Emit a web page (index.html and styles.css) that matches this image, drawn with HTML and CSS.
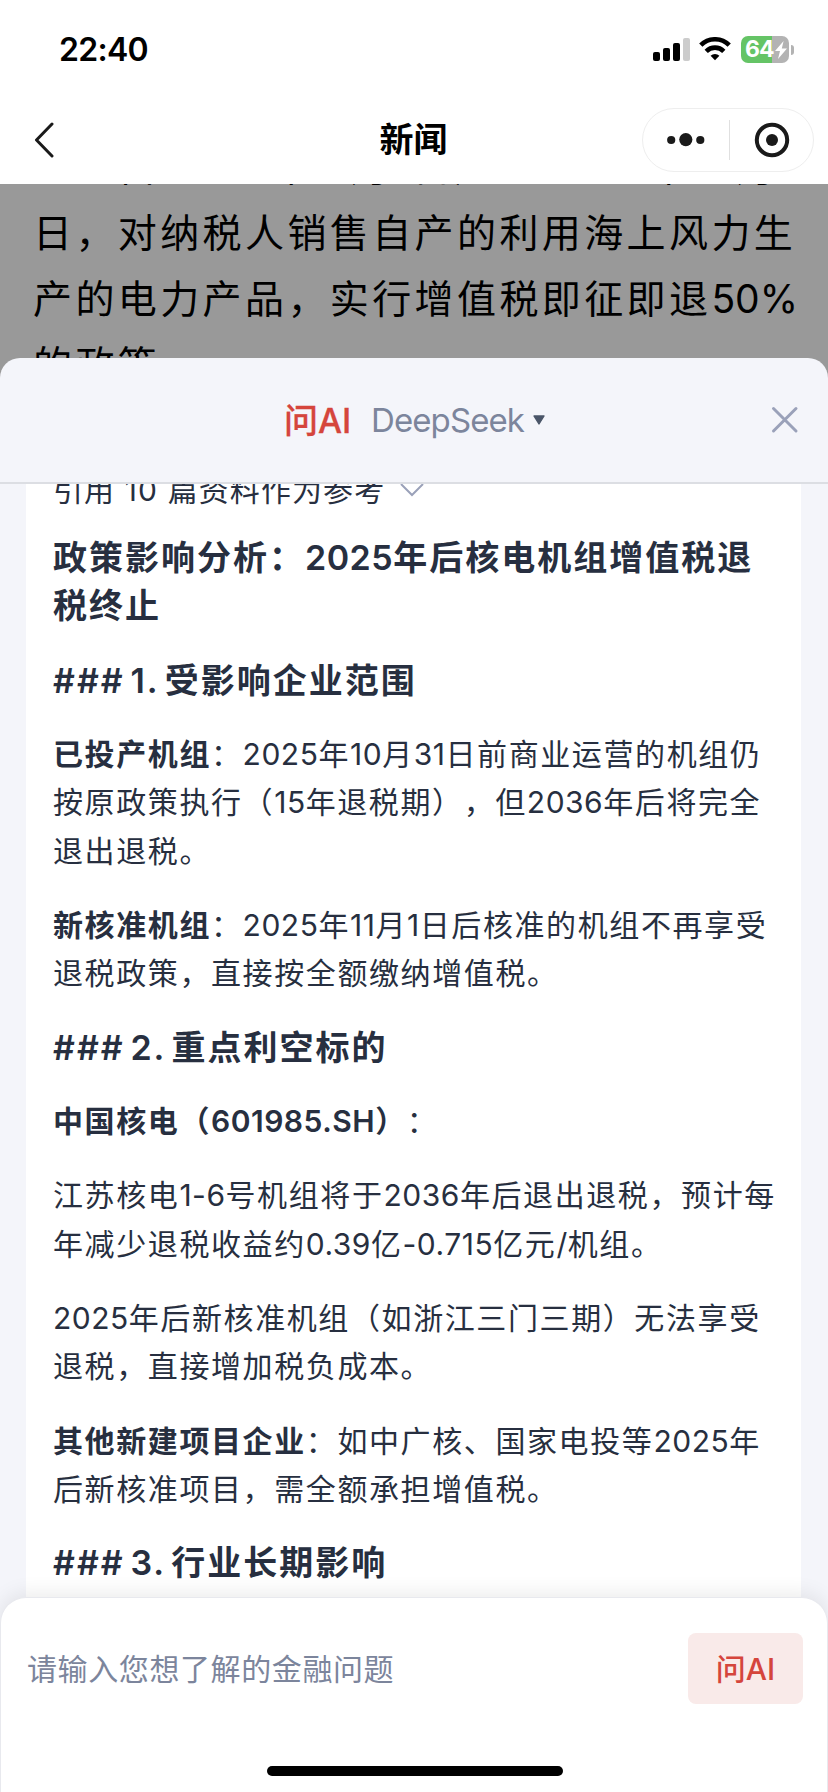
FILE: index.html
```
<!DOCTYPE html>
<html lang="zh-CN">
<head>
    <meta charset="UTF-8">
    <title>新闻</title>
    <link rel="stylesheet" href="styles.css">
</head>
<body>
    <div class="screen">
        <div class="status-bar">
            <span class="time">22:40</span>
            <div class="status-icons">
                <svg class="signal" width="37" height="24" viewBox="0 0 37 24">
                    <rect x="0" y="14" width="7" height="9" rx="2"/>
                    <rect x="10" y="10" width="7" height="13" rx="2"/>
                    <rect x="20" y="5" width="7" height="18" rx="2"/>
                    <rect x="30" y="0" width="7" height="23" rx="2" fill="#ccc"/>
                </svg>
                <svg class="wifi" width="32" height="24" viewBox="0 0 32 24">
                    <path d="M1.8 8.2 A20 20 0 0 1 30.2 8.2" fill="none" stroke="#000" stroke-width="4.6"/>
                    <path d="M7.2 14.3 A12.4 12.4 0 0 1 24.8 14.3" fill="none" stroke="#000" stroke-width="4.6"/>
                    <path d="M11.6 18.7 A6.4 6.4 0 0 1 20.4 18.7 L16 23.3 Z"/>
                </svg>
                <div class="battery">
                    <span>64</span>
                    <svg width="12" height="18" viewBox="0 0 12 18"><path d="M8.6 0 L0 10 H5 L3 18 L12 7.4 H6.8 Z" fill="#fff"/></svg>
                </div>
                <div class="battery-tip"></div>
            </div>
        </div>
        <div class="nav-bar">
            <svg class="back" width="20" height="36" viewBox="0 0 20 36"><path d="M18 2 L2.5 18 L18 34" fill="none" stroke="#1a1a1a" stroke-width="3" stroke-linecap="round" stroke-linejoin="round"/></svg>
            <h1>新闻</h1>
            <div class="capsule">
                <svg width="38" height="14" viewBox="0 0 38 14" fill="#1a1a1a"><circle cx="4.2" cy="7" r="4.1"/><circle cx="18.8" cy="6.6" r="6.6"/><circle cx="33.3" cy="7" r="4.1"/></svg>
                <i></i>
                <svg width="36" height="36" viewBox="0 0 36 36"><circle cx="18" cy="18" r="15.2" fill="none" stroke="#1a1a1a" stroke-width="4"/><circle cx="18" cy="18" r="6" fill="#1a1a1a"/></svg>
            </div>
        </div>
        <div class="article">
            <p>一、自2025年11月1日起至2027年12月31</p>
            <p>日，对纳税人销售自产的利用海上风力生</p>
            <p>产的电力产品，实行增值税即征即退<span class="num">50%</span></p>
            <p>的政策。</p>
        </div>

        <!-- 弹出层 -->
        <div class="sheet">
            <div class="sheet-header">
                <span class="brand">问AI</span>
                <span class="model">DeepSeek</span>
                <svg class="caret" width="12" height="10" viewBox="0 0 12 10"><path d="M1 1 H11 L6 9 Z" fill="#4a5568" stroke="#4a5568" stroke-width="1.4" stroke-linejoin="round"/></svg>
                <svg class="close" width="28" height="28" viewBox="0 0 28 28"><path d="M2.5 2.5 L25 25 M25 2.5 L2.5 25" stroke="#9aa1b9" stroke-width="3" stroke-linecap="round"/></svg>
            </div>
            <div class="sheet-body">
                <div class="answer">
                    <div class="refs">
                        引用 10 篇资料作为参考
                        <svg width="24" height="14" viewBox="0 0 24 14"><path d="M1 1 L12 12 L23 1" fill="none" stroke="#9aa1b9" stroke-width="2"/></svg>
                    </div>
                    <h2>政策影响分析：<span class="n">2025</span>年后核电机组增值税退<br>税终止</h2>
                    <h2>### 1. 受影响企业范围</h2>
                    <p><b>已投产机组</b>：<span class="n">2025</span>年<span class="n">10</span>月<span class="n">31</span>日前商业运营的机组仍<br>按原政策执行（<span class="n">15</span>年退税期），但<span class="n">2036</span>年后将完全<br>退出退税。</p>
                    <p><b>新核准机组</b>：<span class="n">2025</span>年<span class="n">11</span>月<span class="n">1</span>日后核准的机组不再享受<br>退税政策，直接按全额缴纳增值税。</p>
                    <h2>### 2. 重点利空标的</h2>
                    <p><b>中国核电（<span class="n">601985.SH</span>）</b>：</p>
                    <p>江苏核电<span class="n">1-6</span>号机组将于<span class="n">2036</span>年后退出退税，预计每<br>年减少退税收益约<span class="n">0.39</span>亿<span class="n">-0.715</span>亿元<span class="n">/</span>机组。</p>
                    <p><span class="n">2025</span>年后新核准机组（如浙江三门三期）无法享受<br>退税，直接增加税负成本。</p>
                    <p><b>其他新建项目企业</b>：如中广核、国家电投等<span class="n">2025</span>年<br>后新核准项目，需全额承担增值税。</p>
                    <h2>### 3. 行业长期影响</h2>
                </div>
            </div>
            <div class="ask-bar">
                <div class="ask-row">
                    <span class="placeholder">请输入您想了解的金融问题</span>
                    <button>问AI</button>
                </div>
                <div class="home-indicator"></div>
            </div>
        </div>
    </div>
</body>
</html>
```
FILE: styles.css
```
* {
    box-sizing: border-box;
}
body {
    margin: 0;
    font-family: Inter, 'Noto Sans CJK SC', sans-serif;
    background-color: #fff;
    color: #272f40;
    text-spacing-trim: space-all;
}
h1, h2, p {
    margin: 0;
}
.screen {
    width: 828px;
    height: 1792px;
    overflow: hidden;
    display: flex;
    flex-direction: column;
}
.status-bar {
    height: 96px;
    flex-shrink: 0;
    display: flex;
    justify-content: space-between;
    padding: 0 34px 0 59px;
}
.time {
    font-size: 32px;
    font-weight: 600;
    line-height: 39px;
    letter-spacing: -0.7px;
    margin-top: 30px;
    color: #000;
}
.status-icons {
    display: flex;
    align-items: flex-start;
    padding-top: 36px;
}
.signal {
    margin-top: 2px;
}
.wifi {
    margin: 1px 10px 0 9px;
}
.battery {
    width: 48px;
    height: 27px;
    border-radius: 7px;
    background: linear-gradient(to right, #65c466 31px, #b3b3b3 31px);
    color: #fff;
    font-size: 23px;
    font-weight: 700;
    line-height: 27px;
    display: flex;
    align-items: center;
    padding-left: 4px;
    letter-spacing: -1px;
}
.battery svg {
    margin-left: 1px;
}
.battery-tip {
    width: 3px;
    height: 10px;
    margin: 9px 0 0 2px;
    border-radius: 0 4px 4px 0;
    background-color: #b3b3b3;
}
.nav-bar {
    height: 88px;
    flex-shrink: 0;
    display: flex;
    align-items: center;
    justify-content: space-between;
    padding: 0 14px 0 34px;
}
.nav-bar h1 {
    font-size: 34px;
    font-weight: 600;
    line-height: 48px;
    color: #000;
    margin-left: 131px;
}
.capsule {
    width: 172px;
    height: 64px;
    border: 1px solid #eee;
    border-radius: 32px;
    display: flex;
    align-items: center;
    justify-content: space-between;
    padding: 0 23px 0 24px;
}
.capsule i {
    width: 1px;
    height: 40px;
    background-color: #e0e0e0;
    margin-left: -1px;
}
.article {
    height: 204px;
    flex-shrink: 0;
    background-color: #999;
    color: #000;
    overflow: hidden;
    padding-left: 33px;
    font-size: 39px;
    line-height: 66px;
    letter-spacing: 3.4px;
    white-space: nowrap;
}
.article p:first-child {
    margin-top: -50px;
}
.article .num {
    letter-spacing: 0;
}
.sheet {
    flex: 1;
    min-height: 0;
    margin-top: -30px;
    position: relative;
    display: flex;
    flex-direction: column;
    background-color: #f4f5fa;
    border-radius: 20px 20px 0 0;
}
.sheet-header {
    height: 126px;
    flex-shrink: 0;
    display: flex;
    align-items: center;
    border-bottom: 2px solid #dcdee3;
    padding: 0 29px 0 284px;
}
.brand {
    font-size: 34px;
    font-weight: 500;
    color: #d5453c;
    width: 87px;
    padding-bottom: 4px;
    -webkit-text-stroke: 0.3px #d5453c;
}
.model {
    font-size: 33px;
    letter-spacing: -0.9px;
    color: #7c859c;
}
.caret {
    margin-left: 9px;
}
.close {
    margin-left: auto;
}
.sheet-body {
    flex: 1;
    min-height: 0;
    overflow: hidden;
    padding: 0 27px 0 26px;
}
.answer {
    display: flow-root;
    background-color: #fff;
    height: 100%;
    padding-left: 27px;
    white-space: nowrap;
}
.answer h2 {
    font-size: 34px;
    font-weight: 600;
    line-height: 48.3px;
    letter-spacing: 2px;
    word-spacing: -4.8px;
    margin: 26px 0 25.2px;
}
.answer p {
    font-size: 30px;
    line-height: 48.3px;
    letter-spacing: 1.6px;
    margin-bottom: 26px;
}
.answer b {
    font-weight: 600;
}
.answer .n {
    letter-spacing: 0.5px;
}
.refs {
    font-size: 30px;
    line-height: 40px;
    letter-spacing: 1.1px;
    margin-top: -14px;
    margin-bottom: -2px;
    display: flex;
    align-items: center;
    gap: 15px;
}
.ask-bar {
    height: 195px;
    flex-shrink: 0;
    position: relative;
    background-color: #fff;
    border-radius: 26px 26px 0 0;
    border: 1px solid #e8e9ee;
    border-bottom: none;
    box-shadow: 0 -4px 20px rgba(0, 0, 0, 0.08);
    padding: 35px 24px 0 26px;
}
.ask-row {
    display: flex;
    align-items: center;
    justify-content: space-between;
}
.placeholder {
    font-size: 30px;
    color: #7c859c;
    letter-spacing: 0.6px;
    margin-top: -4px;
}
.ask-bar button {
    width: 115px;
    height: 71px;
    border: none;
    border-radius: 8px;
    background-color: #f9eae9;
    color: #d5453c;
    font-family: inherit;
    font-size: 30px;
    font-weight: 500;
    padding: 0 0 4px;
}
.home-indicator {
    width: 296px;
    height: 10px;
    border-radius: 5px;
    background-color: #000;
    margin: 62px auto 0;
}
```
